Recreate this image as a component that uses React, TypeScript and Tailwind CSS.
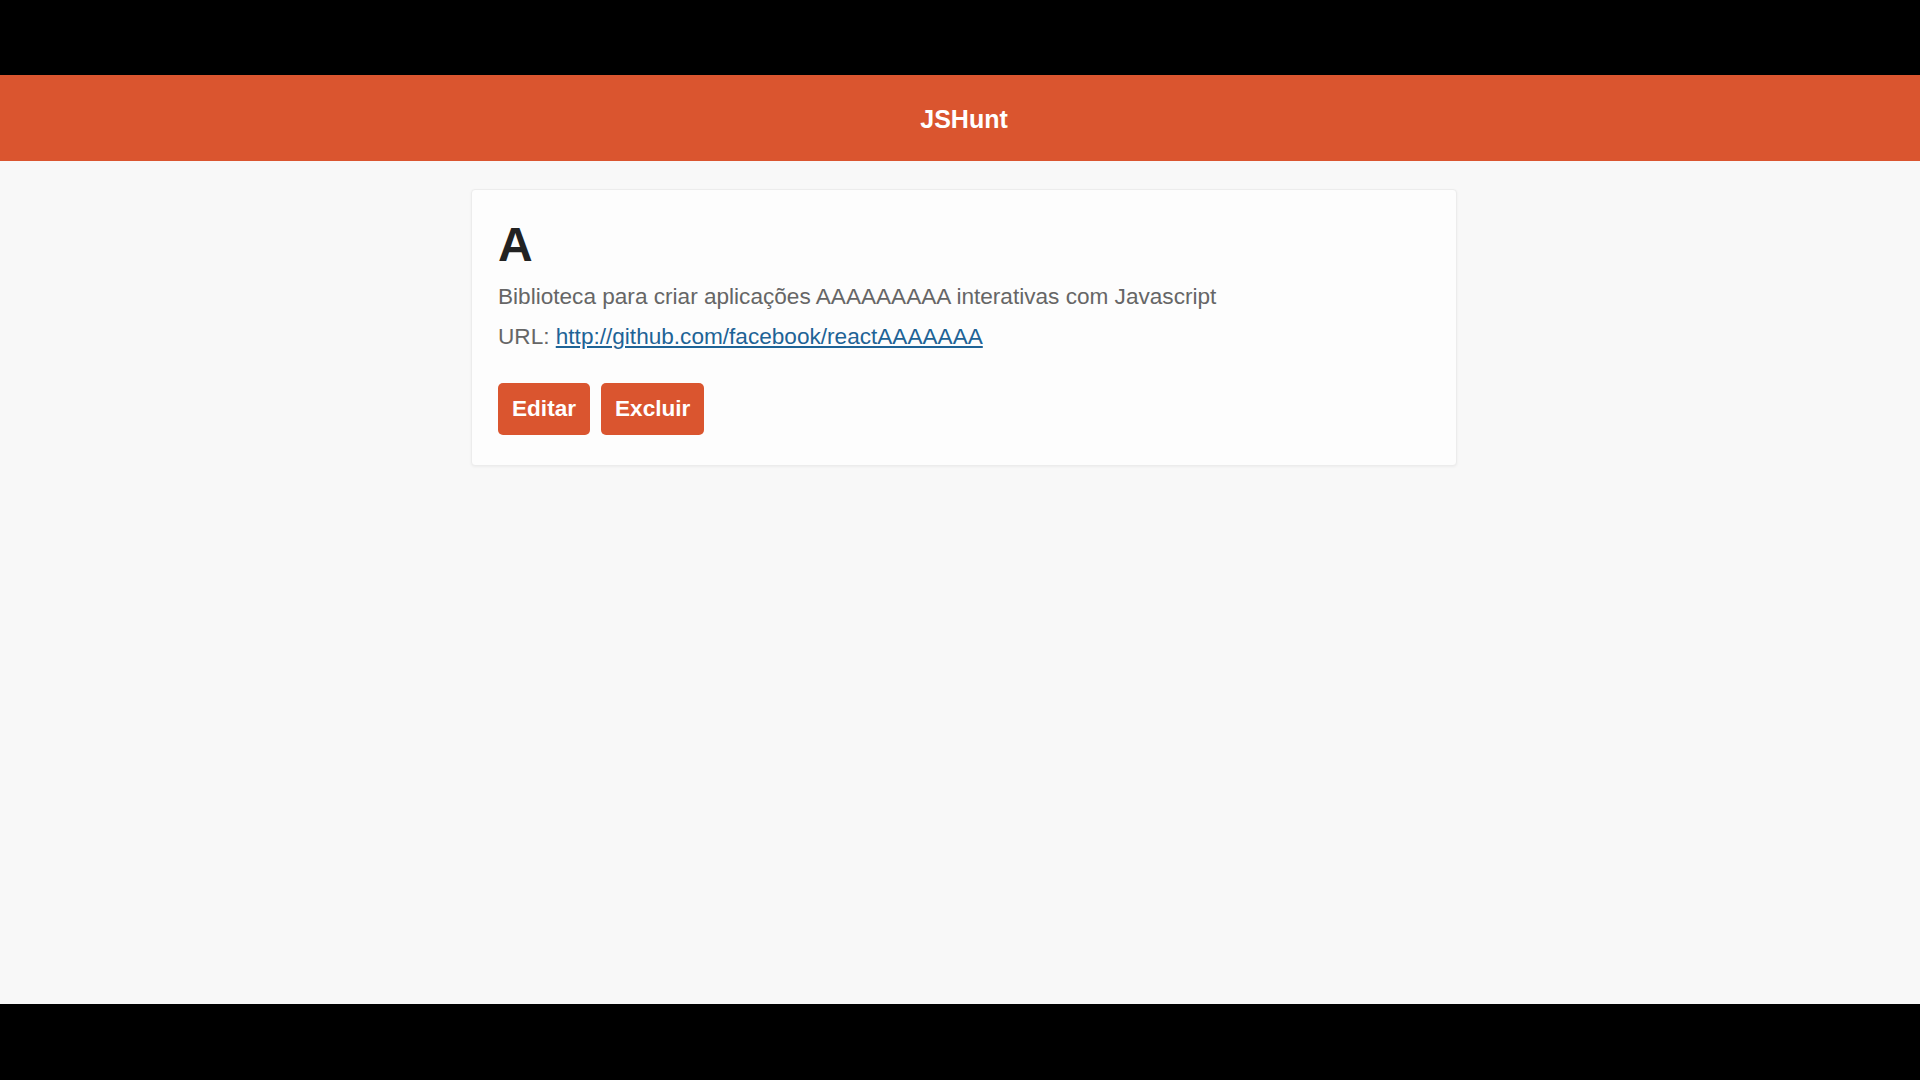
export default function App() {
  return (
    <div className="h-[1080px] w-full flex flex-col bg-black" style={{ fontFamily: '"Liberation Sans", Arial, sans-serif' }}>
      <div className="h-[75px] bg-black" />
      <header className="h-[86px] bg-[#da552f] flex items-center justify-center pt-[4px] pl-[8px]">
        <h1 className="text-white font-bold text-[25px]">JSHunt</h1>
      </header>
      <main className="flex-1 bg-[#f8f8f8] pt-[28px] pl-[8px]">
        <div className="mx-auto w-[986px] bg-[#fdfdfd] border border-[#ececec] rounded-[4px] shadow-[0_1px_3px_rgba(0,0,0,0.05)] px-[26px] pt-[31px] pb-[30px]">
          <h2 className="text-[48px] font-bold text-[#222] leading-none">A</h2>
          <p className="mt-[8px] text-[22.6px] text-[#666] leading-[40px]">
            Biblioteca para criar aplicações AAAAAAAAA interativas com Javascript
          </p>
          <p className="text-[22.6px] text-[#666] leading-[40px]">
            URL:{" "}
            <a href="#" className="text-[#1e6396] underline">
              http://github.com/facebook/reactAAAAAAA
            </a>
          </p>
          <div className="mt-[26px] flex gap-[11px]">
            <button className="h-[52px] px-[14px] bg-[#da552f] text-white font-bold text-[22.6px] rounded-[5px]">
              Editar
            </button>
            <button className="h-[52px] px-[14px] bg-[#da552f] text-white font-bold text-[22.6px] rounded-[5px]">
              Excluir
            </button>
          </div>
        </div>
      </main>
      <div className="h-[76px] bg-black" />
    </div>
  );
}
